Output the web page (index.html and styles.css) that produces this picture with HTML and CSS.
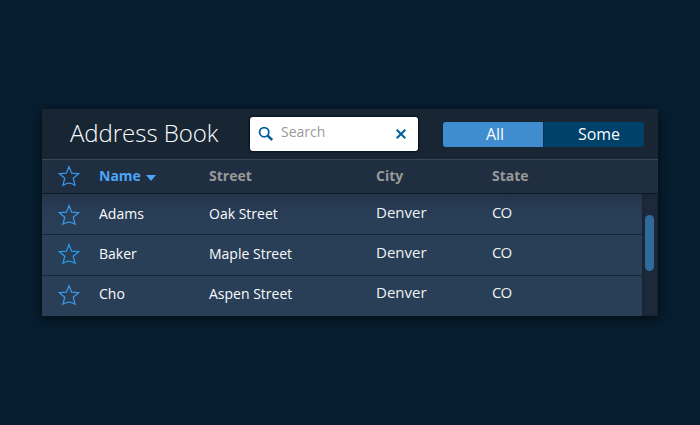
FILE: index.html
```html
<!DOCTYPE html>
<html lang="en">
<head>
<meta charset="utf-8">
<title>Address Book</title>
<link rel="stylesheet" href="styles.css">
</head>
<body>
<svg class="defs" width="0" height="0" aria-hidden="true">
  <symbol id="star" viewBox="0 0 22 22">
    <path d="M11 1.6 L13.6 8.2 L20.7 8.7 L15.2 13.2 L17 20.2 Q14 18.6 11 18 Q8 18.6 5 20.2 L6.8 13.2 L1.3 8.7 L8.4 8.2 Z"/>
  </symbol>
</svg>
<main class="panel">
  <header class="toolbar">
    <h1 class="title">Address Book</h1>
    <label class="search">
      <svg class="lens" viewBox="0 0 16 16"><circle cx="6.2" cy="6.2" r="4.6"/><path d="M9.6 9.6 L14.2 14"/></svg>
      <span class="placeholder">Search</span>
      <svg class="clear" viewBox="0 0 10 10"><path d="M.7 .7 L9.3 9.3 M9.3 .7 L.7 9.3"/></svg>
    </label>
    <div class="segments"><span class="segment selected">All</span><span class="segment some">Some</span></div>
  </header>
  <div class="row heads">
    <svg class="star"><use href="#star"/></svg>
    <span class="sorted">Name<svg class="arrow" viewBox="0 0 10 6"><path d="M0 0 H10 L5 6 Z"/></svg></span>
    <span>Street</span><span>City</span><span>State</span>
  </div>
  <div class="content">
    <div class="rows">
      <div class="row"><svg class="star"><use href="#star"/></svg><span>Adams</span><span>Oak Street</span><span class="place">Denver</span><span class="place state">CO</span></div>
      <div class="row second"><svg class="star"><use href="#star"/></svg><span>Baker</span><span>Maple Street</span><span class="place">Denver</span><span class="place state">CO</span></div>
      <div class="row third"><svg class="star"><use href="#star"/></svg><span>Cho</span><span>Aspen Street</span><span class="place">Denver</span><span class="place state">CO</span></div>
    </div>
    <div class="track"><div class="thumb"></div></div>
  </div>
</main>
</body>
</html>
```
FILE: styles.css
```css
* { box-sizing: border-box; }
body {
  margin: 0;
  height: 425px;
  padding: 109px 42px;
  background: #061e30;
  color: #fafcfd;
  font: 14px/20px "Open Sans", "Noto Sans", sans-serif;
  overflow: hidden;
}
.defs { position: absolute; }
.panel {
  width: 616px;
  height: 207px;
  box-shadow: 0 3px 12px rgba(0, 0, 0, .65);
}
.toolbar {
  display: flex;
  height: 51px;
  padding-left: 28px;
  background: #182634;
  border-bottom: 1px solid #34495c;
}
.title {
  width: 180px;
  margin: 7px 0 0;
  font-size: 24px;
  line-height: 33px;
  font-weight: 300;
  letter-spacing: -.05px;
  white-space: nowrap;
}
.search {
  display: flex;
  width: 168px;
  height: 34px;
  margin-top: 8px;
  padding-left: 8px;
  background: #fff;
  border-radius: 3px;
  box-shadow: 0 0 2px 1px #04121d;
}
.lens { width: 16px; height: 16px; margin-top: 9px; fill: none; stroke: #00609c; stroke-width: 1.8; }
.lens path { stroke-width: 2.5; }
.placeholder { width: 122px; padding: 5px 0 0 7px; color: #999; }
.clear { width: 10px; height: 10px; margin-top: 12px; stroke: #00609c; stroke-width: 2; }
.segments {
  display: flex;
  width: 201px;
  height: 25px;
  margin: 13px 0 0 25px;
  border-radius: 3px;
  background: #00416a;
  overflow: hidden;
}
.segment { width: 100px; font-size: 16px; line-height: 25px; text-align: center; }
.selected { padding-left: 4px; background: #3f8ccf; }
.some { width: 101px; padding-left: 10px; border-left: 1px solid #08304c; }
.row {
  display: grid;
  grid-template-columns: 42px 110px 167px 116px 1fr;
  height: 41px;
  padding: 10px 0 0 15px;
  background: #293f57;
  border-bottom: 1px solid #182536;
}
.star { width: 24px; height: 22px; fill: none; stroke: #3c9aeb; stroke-width: 1.2; }
.heads {
  height: 34px;
  padding-top: 6px;
  background: #1f2e40;
  border-bottom-color: #0d1a25;
  color: #999;
  font-weight: 700;
}
.heads .star { margin-top: -1px; }
.sorted { color: #4ea5fa; }
.arrow { width: 10px; height: 6px; margin-left: 5px; fill: currentColor; }
.content { display: flex; height: 122px; }
.rows { width: 600px; }
.rows .row:first-child { background: linear-gradient(#233349, #273b54 14px, #293f57 28px); }
.second .star { margin-top: -1px; stroke: #299eeb; }
.third { border-bottom: 0; padding-top: 8px; height: 40px; }
.second { padding-top: 9px; }
.third .star { margin-top: 0; }
.place { margin-top: -2px; font-size: 15px; color: #eef2f5; }
.state { letter-spacing: -1px; }
.track { width: 16px; padding: 21px 4px 0 3px; background: #1d283a; box-shadow: inset 0 0 3px #142232; }
.thumb { height: 56px; border-radius: 5px; background: #306a9d; }
```
